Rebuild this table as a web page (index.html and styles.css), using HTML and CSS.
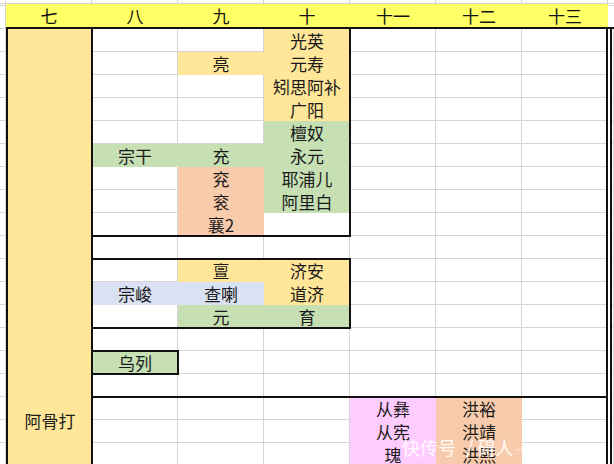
FILE: index.html
```html
<!DOCTYPE html>
<html lang="zh">
<head>
<meta charset="utf-8">
<link rel="stylesheet" href="styles.css">
</head>
<body>
<div class="sheet">
  <div class="top-strip"></div>
  <div class="header">
    <div class="hc">七</div>
    <div class="hc">八</div>
    <div class="hc">九</div>
    <div class="hc">十</div>
    <div class="hc">十一</div>
    <div class="hc">十二</div>
    <div class="hc">十三</div>
  </div>

  <div class="col7"></div>
  <div class="leader">阿骨打</div>

  <div class="stack y a-shi-top"><div>光英</div><div>元寿</div><div>矧思阿补</div><div>广阳</div></div>
  <div class="cell y a-liang">亮</div>
  <div class="stack g a-shi-green"><div>檀奴</div><div>永元</div><div>耶浦儿</div><div>阿里白</div></div>
  <div class="cell g a-zonggan">宗干</div>
  <div class="cell g a-chong">充</div>
  <div class="stack p a-peach9"><div>兖</div><div>衮</div><div>襄2</div></div>

  <div class="cell y a-dan">亶</div>
  <div class="stack y a-jian"><div>济安</div><div>道济</div></div>
  <div class="cell b a-zongjun">宗峻</div>
  <div class="cell b a-chala">查喇</div>
  <div class="cell g a-yuan">元</div>
  <div class="cell g a-yu">育</div>

  <div class="cell g a-wulie">乌列</div>

  <div class="stack k a-cong"><div>从彝</div><div>从宪</div><div>瑰</div></div>
  <div class="stack p a-hong"><div>洪裕</div><div>洪靖</div><div>洪熙</div></div>

  <div class="frame"></div>
  <div class="col7-edge"></div>
  <div class="box1"></div>
  <div class="box2"></div>
  <div class="box3"></div>
  <div class="box4"></div>
  <div class="right-strip"></div>
</div>
<div class="watermark"><span class="wm-main">快传号</span><span class="wm-slash">/</span><span class="wm-main">碍人</span><span class="wm-tail">— — &nbsp;— —</span></div>
</body>
</html>
```

FILE: styles.css
```css
* {
  box-sizing: border-box;
  margin: 0;
  padding: 0;
}

html, body {
  width: 614px;
  height: 464px;
  overflow: hidden;
}

body {
  margin: 0;
  position: relative;
  background-color: #ffffff;
  background-image:
    linear-gradient(to right, transparent 85px, #d4d4d4 85px),
    linear-gradient(to bottom, transparent 22px, #d4d4d4 22px);
  background-size: 86px 23px;
  background-position: 6px 29px;
  font-family: "Noto Sans CJK SC", "Noto Sans", sans-serif;
  font-size: 17px;
  color: #1b1b1b;
}

.sheet {
  display: grid;
  grid-template-columns: 6px repeat(7, 86px) 6px;
  grid-template-rows: 4px 25px repeat(19, 23px);
}

.top-strip {
  grid-row: 1;
  grid-column: 1 / -1;
  border-bottom: 1px solid #d4d4d4;
}

.header {
  grid-row: 2;
  grid-column: 2 / 10;
  display: grid;
  grid-template-columns: repeat(7, 86px) 6px;
  background: linear-gradient(to right, #ffff66 602px, transparent 602px);
  border-bottom: 2px solid #111;
  margin-right: -2px;
}

.hc {
  text-align: center;
  line-height: 23px;
  color: #111;
}

.col7 {
  grid-column: 2;
  grid-row: 3 / -1;
  background: #ffe699;
}

.leader {
  grid-column: 2;
  grid-row: 19 / 21;
  display: flex;
  align-items: center;
  justify-content: center;
  padding-left: 2px;
}

.cell {
  line-height: 23px;
  text-align: center;
  white-space: nowrap;
}

.stack {
  display: flex;
  flex-direction: column;
}

.stack > div {
  height: 23px;
  line-height: 23px;
  text-align: center;
  white-space: nowrap;
}

.y { background: #ffe699; }
.g { background: #c6e0b4; }
.p { background: #f8cbad; }
.b { background: #d9e1f2; }
.k { background: #ffccff; }

.a-shi-top   { grid-column: 5; grid-row: 3 / 7; }
.a-liang     { grid-column: 4; grid-row: 4; }
.a-shi-green { grid-column: 5; grid-row: 7 / 11; }
.a-zonggan   { grid-column: 3; grid-row: 8; }
.a-chong     { grid-column: 4; grid-row: 8; }
.a-peach9    { grid-column: 4; grid-row: 9 / 12; }

.a-dan       { grid-column: 4; grid-row: 13; }
.a-jian      { grid-column: 5; grid-row: 13 / 15; }
.a-zongjun   { grid-column: 3; grid-row: 14; }
.a-chala     { grid-column: 4; grid-row: 14; }
.a-yuan      { grid-column: 4; grid-row: 15; }
.a-yu        { grid-column: 5; grid-row: 15; }

.a-wulie     { grid-column: 3; grid-row: 17; }

.a-cong      { grid-column: 6; grid-row: 19 / 22; }
.a-hong      { grid-column: 7; grid-row: 19 / 22; }

.frame {
  grid-column: 2 / 9;
  grid-row: 3 / -1;
  border-left: 2px solid #111;
  border-right: 2px solid #111;
}

.col7-edge {
  grid-column: 2;
  grid-row: 3 / -1;
  border-right: 2px solid #111;
  margin-right: -1px;
}

.box1 {
  grid-column: 3 / 6;
  grid-row: 3 / 12;
  border-right: 2px solid #111;
  border-bottom: 2px solid #111;
  margin: 0 -1px -1px 0;
}

.box2 {
  grid-column: 3 / 6;
  grid-row: 13 / 16;
  border-top: 2px solid #111;
  border-right: 2px solid #111;
  border-bottom: 2px solid #111;
  margin: -1px -1px -1px 0;
}

.box3 {
  grid-column: 3;
  grid-row: 17;
  border-top: 2px solid #111;
  border-right: 2px solid #111;
  border-bottom: 2px solid #111;
  margin: -1px -1px -1px 0;
}

.box4 {
  grid-column: 3 / 9;
  grid-row: 19 / -1;
  border-top: 2px solid #111;
  margin-top: -1px;
}

.right-strip {
  grid-column: 9;
  grid-row: 3 / -1;
  background: linear-gradient(to right, #ffffff 0 2px, #111 2px 4px, transparent 4px 5px, #d4d4d4 5px 6px);
}

.watermark {
  position: absolute;
  left: 402px;
  top: 435px;
  font-size: 18px;
  line-height: 24px;
  color: rgba(255, 255, 255, 0.93);
  white-space: nowrap;
}

.wm-slash {
  display: inline-block;
  margin: 0 4px 0 10px;
  font-size: 19px;
}

.wm-tail {
  font-size: 15px;
  margin-left: 2px;
  color: rgba(255, 255, 255, 0.75);
}
```
